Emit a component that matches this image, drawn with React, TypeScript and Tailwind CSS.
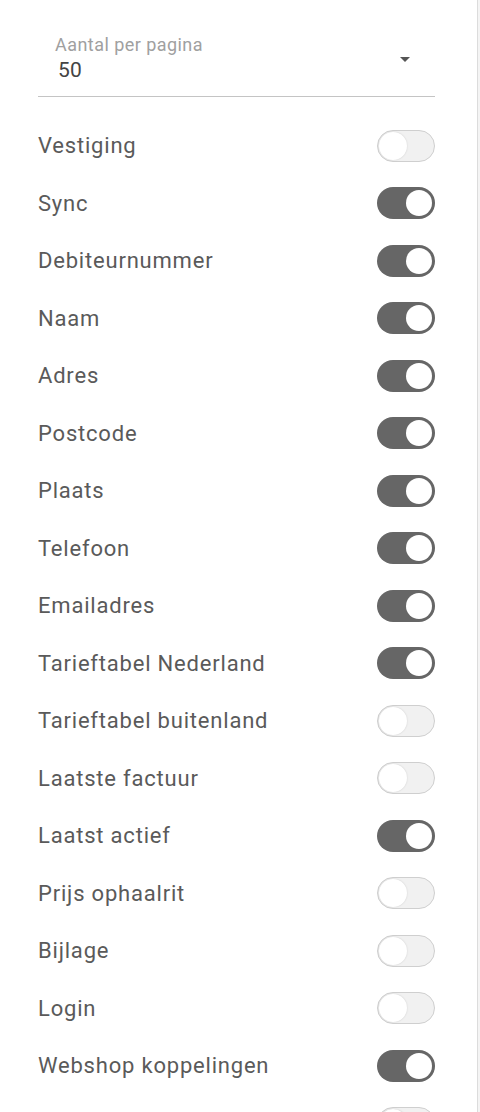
import React from "react";

const rows: [string, boolean][] = [
  ["Vestiging", false],
  ["Sync", true],
  ["Debiteurnummer", true],
  ["Naam", true],
  ["Adres", true],
  ["Postcode", true],
  ["Plaats", true],
  ["Telefoon", true],
  ["Emailadres", true],
  ["Tarieftabel Nederland", true],
  ["Tarieftabel buitenland", false],
  ["Laatste factuur", false],
  ["Laatst actief", true],
  ["Prijs ophaalrit", false],
  ["Bijlage", false],
  ["Login", false],
  ["Webshop koppelingen", true],
  ["", false],
];

function Toggle({ on }: { on: boolean }) {
  if (on) {
    return (
      <div className="w-[58px] h-[32px] rounded-full bg-[#666666] flex items-center justify-end pr-[3px]">
        <div className="w-[26px] h-[26px] rounded-full bg-white" />
      </div>
    );
  }
  return (
    <div className="w-[58px] h-[32px] rounded-full bg-[#f1f1f1] border border-[#cfcfcf] flex items-center pl-[1px]">
      <div className="w-[28px] h-[28px] rounded-full bg-white shadow-[0_0_2px_rgba(0,0,0,0.15)]" />
    </div>
  );
}

export default function App() {
  return (
    <div
      className="w-[480px] h-[1112px] overflow-hidden bg-white flex"
      style={{ fontFamily: "Roboto, 'Liberation Sans', sans-serif" }}
    >
      <div className="flex-1 pl-[38px] pr-[42px] pt-[35px]">
        <div className="flex items-center border-b border-[#c4c4c4] pb-[14px]">
          <div className="flex-1">
            <div className="pl-[17px] text-[18px] leading-[20px] tracking-[0.45px] text-[#a0a0a0]">Aantal per pagina</div>
            <div className="pl-[20px] mt-[3px] text-[21px] leading-[24px] tracking-[0.3px] text-[#444444]">50</div>
          </div>
          <svg width="10" height="5" viewBox="0 0 10 5" className="mr-[25px] mt-[2px]">
            <path d="M0 0 L10 0 L5 5 Z" fill="#555555" />
          </svg>
        </div>
        <div className="mt-[20px]">
          {rows.map(([label, on], i) => (
            <div key={i} className="h-[57.5px] flex items-center justify-between">
              <span className="text-[22px] tracking-[0.8px] text-[#5a5a5a]">{label}</span>
              <Toggle on={on} />
            </div>
          ))}
        </div>
      </div>
      <div className="w-[3px] h-full border-l border-[#dcdcdc] bg-[#f4f4f4]" />
    </div>
  );
}
